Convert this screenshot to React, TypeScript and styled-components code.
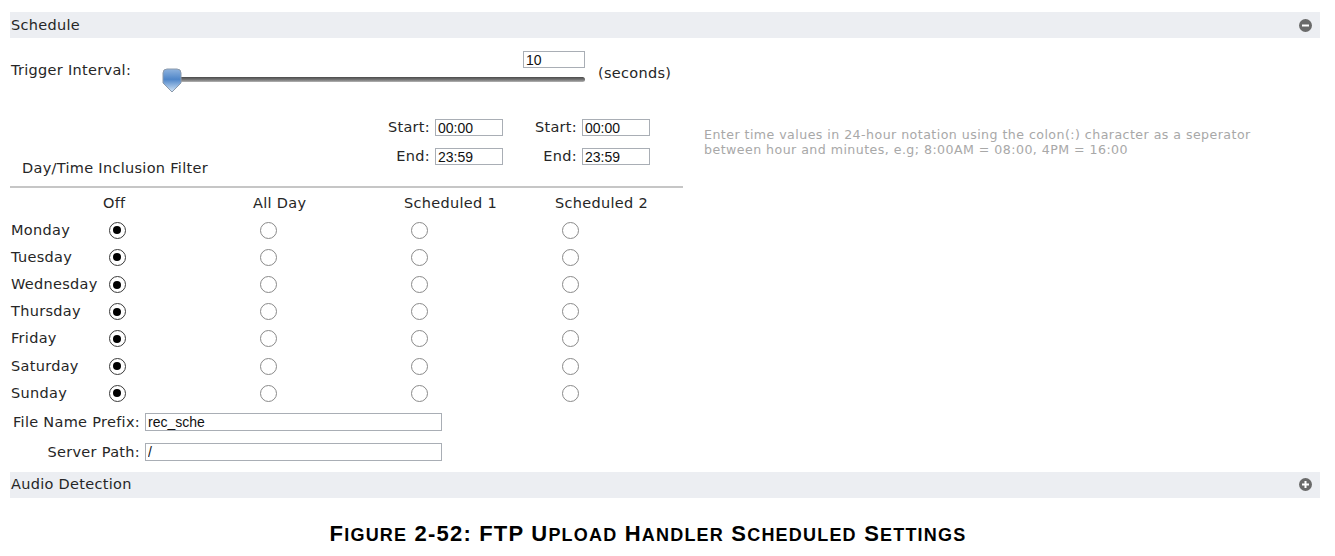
import styled, { createGlobalStyle } from 'styled-components';

const GlobalStyle = createGlobalStyle`
  body {
    margin: 0;
    background: #ffffff;
    font-family: "DejaVu Sans", Verdana, sans-serif;
    color: #262626;
  }
`;

const days = ['Monday', 'Tuesday', 'Wednesday', 'Thursday', 'Friday', 'Saturday', 'Sunday'];
const modes = ['Off', 'All Day', 'Scheduled 1', 'Scheduled 2'];

// caption words: first letter full size, rest as small capitals
const captionWords = ['Figure', '2-52:', 'FTP', 'Upload', 'Handler', 'Scheduled', 'Settings'];

const CircleIcon = ({ plus }: { plus?: boolean }) => (
  <svg width="13" height="13" viewBox="0 0 13 13">
    <circle cx="6.5" cy="6.5" r="6.5" fill="#6a6a6a" />
    <rect x="3" y="5.5" width="7" height="2" fill="#fff" />
    {plus && <rect x="5.5" y="3" width="2" height="7" fill="#fff" />}
  </svg>
);

const Thumb = () => (
  <svg width="20" height="25" viewBox="0 0 20 25">
    <defs>
      <linearGradient id="thumbFill" x1="0" y1="0" x2="0" y2="1">
        <stop offset="0" stopColor="#8fb3de" />
        <stop offset="0.45" stopColor="#4f86c9" />
        <stop offset="1" stopColor="#d5e7f8" />
      </linearGradient>
    </defs>
    <path
      d="M1 5 Q1 1 5 1 L15 1 Q19 1 19 5 L19 15 L10 24 L1 15 Z"
      fill="url(#thumbFill)"
      stroke="#8c9aab"
      strokeWidth="1"
    />
  </svg>
);

const App = () => {
  return (
    <>
      <GlobalStyle />
      <Page>
        <SectionBar>
          <BarTitle>Schedule</BarTitle>
          <CircleIcon />
        </SectionBar>

        <TriggerRow>
          <TriggerLabel>Trigger Interval:</TriggerLabel>
          <SliderBlock>
            <IntervalInput defaultValue="10" />
            <TrackArea>
              <Track />
              <ThumbHolder>
                <Thumb />
              </ThumbHolder>
            </TrackArea>
          </SliderBlock>
          <Seconds>(seconds)</Seconds>
        </TriggerRow>

        <MainRow>
          <LeftCol>
            <FilterHead>
              <FilterTitle>Day/Time Inclusion Filter</FilterTitle>
              <TimeGrid>
                <TimeLabel>Start:</TimeLabel>
                <TimeInput defaultValue="00:00" />
                <TimeLabel>Start:</TimeLabel>
                <TimeInput defaultValue="00:00" />
                <TimeLabel>End:</TimeLabel>
                <TimeInput defaultValue="23:59" />
                <TimeLabel>End:</TimeLabel>
                <TimeInput defaultValue="23:59" />
              </TimeGrid>
            </FilterHead>
            <Divider />
            <DayGrid>
              <span />
              {modes.map((m, i) => (
                <ColHead key={m} $shift={i === 0 ? 3 : 2}>{m}</ColHead>
              ))}
              {days.map((d) => (
                <DayRow key={d}>
                  <DayName>{d}</DayName>
                  {modes.map((m, i) => (
                    <Cell key={m}>
                      <Radio $checked={i === 0} />
                    </Cell>
                  ))}
                </DayRow>
              ))}
            </DayGrid>
          </LeftCol>
          <HelpText>
            Enter time values in 24-hour notation using the colon(:) character as a seperator
            <br />
            between hour and minutes, e.g; 8:00AM = 08:00, 4PM = 16:00
          </HelpText>
        </MainRow>

        <FormGrid>
          <FormLabel>File Name Prefix:</FormLabel>
          <TextInput defaultValue="rec_sche" />
          <FormLabel>Server Path:</FormLabel>
          <TextInput defaultValue="/" />
        </FormGrid>

        <SectionBar $top={11}>
          <BarTitle>Audio Detection</BarTitle>
          <CircleIcon plus />
        </SectionBar>
      </Page>
      <Caption>
        {captionWords.map((w, i) => (
          <span key={w}>
            {i > 0 && ' '}
            {/^[A-Z]+$/.test(w) || /\d/.test(w) ? (
              <Big>{w}</Big>
            ) : (
              <>
                <Big>{w[0]}</Big>
                <Small>{w.slice(1).toUpperCase()}</Small>
              </>
            )}
          </span>
        ))}
      </Caption>
    </>
  );
};

export default App;

const Page = styled.div`
  padding: 12px 15px 0 10px;
  font-size: 14.5px;
  letter-spacing: 0.3px;
`;

const SectionBar = styled.div<{ $top?: number }>`
  display: flex;
  align-items: center;
  justify-content: space-between;
  height: 26px;
  margin-top: ${(p) => p.$top || 0}px;
  padding: 0 8px 0 1px;
  background: #eceef2;
`;

const BarTitle = styled.span`
  line-height: 17px;
`;

const TriggerRow = styled.div`
  display: flex;
  align-items: flex-start;
  padding: 13px 0 8px;
`;

const TriggerLabel = styled.div`
  width: 152px;
  padding-left: 1px;
  margin-top: 10.5px;
  line-height: 17px;
`;

const SliderBlock = styled.div`
  display: flex;
  flex-direction: column;
  align-items: flex-end;
  width: 422px;
`;

const inputBase = `
  box-sizing: border-box;
  border: 1px solid #a9aeb5;
  padding: 0 2px;
  margin: 0;
  font-family: "Liberation Sans", Arial, sans-serif;
  font-size: 14px;
  letter-spacing: 0;
  color: #111;
  background: #fff;
  outline: none;
`;

const IntervalInput = styled.input`
  ${inputBase}
  width: 62px;
  height: 17px;
`;

const TrackArea = styled.div`
  position: relative;
  width: 100%;
  height: 24px;
`;

const Track = styled.div`
  margin-top: 9px;
  height: 5px;
  border-radius: 0 3px 3px 0;
  background: linear-gradient(#4a4a4a, #7c7c7c 60%, #b5b5b5);
`;

const ThumbHolder = styled.div`
  position: absolute;
  left: -1px;
  top: 0;
  line-height: 0;
`;

const Seconds = styled.div`
  margin: 13.5px 0 0 13px;
  line-height: 17px;
`;

const MainRow = styled.div`
  display: flex;
  align-items: flex-start;
`;

const LeftCol = styled.div`
  width: 673px;
`;

const FilterHead = styled.div`
  display: flex;
  align-items: flex-start;
  padding-top: 19px;
`;

const FilterTitle = styled.div`
  flex: 0 0 363px;
  padding: 40.5px 0 0 12px;
  line-height: 17px;
`;

const TimeGrid = styled.div`
  display: grid;
  grid-template-columns: 50px 68px 79px 68px;
  grid-auto-rows: 17px;
  row-gap: 12px;
`;

const TimeLabel = styled.span`
  justify-self: end;
  padding-right: 5px;
  line-height: 17px;
`;

const TimeInput = styled.input`
  ${inputBase}
  width: 68px;
  height: 17px;
`;

const Divider = styled.div`
  margin-top: 9.5px;
  border-top: 2px solid #c6c6c6;
`;

const DayGrid = styled.div`
  display: grid;
  grid-template-columns: 90px 151px 151px 151px 130px;
  padding-top: 6.5px;
`;

const ColHead = styled.div<{ $shift: number }>`
  padding-left: ${(p) => p.$shift}px;
  line-height: 17px;
  margin-bottom: 5px;
  white-space: nowrap;
`;

const DayRow = styled.div`
  display: contents;
`;

const DayName = styled.div`
  padding-left: 1px;
  line-height: 27.2px;
`;

const Cell = styled.div`
  display: flex;
  align-items: center;
  height: 27.2px;
  padding-left: 8.5px;
`;

const Radio = styled.span<{ $checked?: boolean }>`
  box-sizing: border-box;
  width: 17px;
  height: 17px;
  border-radius: 50%;
  border: 1.5px solid ${(p) => (p.$checked ? '#3a3a3a' : '#8a8a8a')};
  background: #fff;
  display: flex;
  align-items: center;
  justify-content: center;

  &::after {
    content: '';
    display: ${(p) => (p.$checked ? 'block' : 'none')};
    width: 8px;
    height: 8px;
    border-radius: 50%;
    background: #000;
  }
`;

const HelpText = styled.div`
  margin: 27px 0 0 21px;
  font-size: 12.6px;
  letter-spacing: 0.45px;
  line-height: 15px;
  color: #a8a8a8;
  white-space: nowrap;
`;

const FormGrid = styled.div`
  display: grid;
  grid-template-columns: 135px 297px;
  grid-auto-rows: 18px;
  row-gap: 12px;
  padding-top: 6px;
`;

const FormLabel = styled.span`
  justify-self: end;
  padding-right: 5px;
  line-height: 18px;
  white-space: nowrap;
`;

const TextInput = styled.input`
  ${inputBase}
  width: 297px;
  height: 18px;
`;

const Caption = styled.div`
  margin-top: 25px;
  padding-right: 39px;
  text-align: center;
  font-family: "Liberation Sans", Arial, sans-serif;
  font-weight: bold;
  font-size: 22px;
  line-height: 22px;
  letter-spacing: 1.2px;
  color: #000;
`;

const Big = styled.span`
  font-size: 22px;
`;

const Small = styled.span`
  font-size: 18px;
`;
